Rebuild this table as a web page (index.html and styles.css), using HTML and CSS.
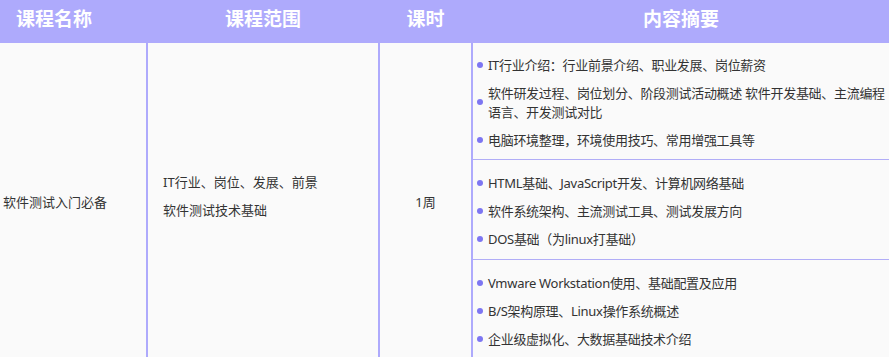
FILE: index.html
```html
<!DOCTYPE html>
<html lang="zh">
<head>
<meta charset="utf-8">
<title>课程</title>
<link rel="stylesheet" href="styles.css">
</head>
<body>
<div class="table">
  <div class="head">
    <div class="th th-name">课程名称</div>
    <div class="th">课程范围</div>
    <div class="th">课时</div>
    <div class="th">内容摘要</div>
  </div>
  <div class="body">
    <div class="td td-name">软件测试入门必备</div>
    <div class="td td-scope">
      <p>IT行业、岗位、发展、前景</p>
      <p>软件测试技术基础</p>
    </div>
    <div class="td td-hours">1周</div>
    <div class="td td-summary">
      <ul class="group group-first">
        <li>IT行业介绍：行业前景介绍、职业发展、岗位薪资</li>
        <li>软件研发过程、岗位划分、阶段测试活动概述 软件开发基础、主流编程语言、开发测试对比</li>
        <li>电脑环境整理，环境使用技巧、常用增强工具等</li>
      </ul>
      <ul class="group">
        <li>HTML基础、JavaScript开发、计算机网络基础</li>
        <li>软件系统架构、主流测试工具、测试发展方向</li>
        <li>DOS基础（为linux打基础）</li>
      </ul>
      <ul class="group">
        <li>Vmware Workstation使用、基础配置及应用</li>
        <li>B/S架构原理、Linux操作系统概述</li>
        <li>企业级虚拟化、大数据基础技术介绍</li>
      </ul>
    </div>
  </div>
</div>
</body>
</html>
```
FILE: styles.css
```css
html, body {
  margin: 0;
  padding: 0;
  background: #fafafa;
  overflow: hidden;
}
body {
  font-family: "Noto Sans", "Noto Sans CJK SC", sans-serif;
  color: #333;
  font-size: 13px;
}
.table {
  width: 889px;
}
.head, .body {
  display: grid;
  grid-template-columns: 146px 230px 91px 416px;
  column-gap: 2px;
}
.head {
  background: #aeaafc;
  height: 43px;
}
.body {
  background: #aeaafc;
  height: 320px;
}
.th {
  color: #fff;
  font-weight: 700;
  font-size: 19px;
  line-height: 36px;
  text-align: center;
  font-family: "Noto Sans CJK SC", sans-serif;
}
.th-name {
  text-align: left;
  padding-left: 16px;
}
.td {
  background: #fafafa;
}
.td-name {
  display: flex;
  align-items: center;
  padding-left: 3px;
  padding-bottom: 4px;
}
.td-scope {
  display: flex;
  flex-direction: column;
  justify-content: center;
  padding-left: 15px;
  padding-bottom: 4px;
}
.td-scope p {
  margin: 0 0 10px;
  line-height: 18px;
}
.td-hours {
  display: flex;
  align-items: center;
  justify-content: center;
  padding-bottom: 4px;
}
.td-summary {
  display: flex;
  flex-direction: column;
}
.group {
  list-style: none;
  margin: 0;
  padding: 14px 0 10px 4px;
  border-top: 1px solid #b1adf7;
}
.group-first {
  border-top: none;
  padding-top: 13px;
  padding-bottom: 9px;
}
.group li {
  display: flex;
  align-items: center;
  line-height: 19px;
  margin-bottom: 9px;
  letter-spacing: -0.3px;
}
.group li:last-child {
  margin-bottom: 0;
}
.group li::before {
  content: "";
  flex: none;
  width: 6px;
  height: 6px;
  border-radius: 50%;
  background: #7d76f2;
  margin-right: 5px;
  margin-top: -2px;
}
```
